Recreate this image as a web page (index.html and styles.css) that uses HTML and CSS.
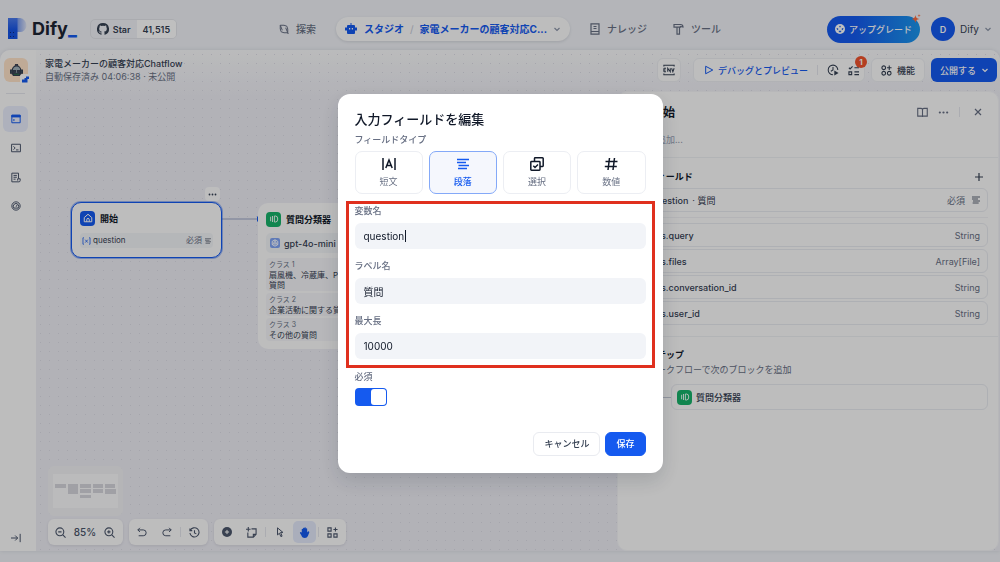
FILE: index.html
```html
<!DOCTYPE html>
<html lang="ja">
<head>
<meta charset="utf-8">
<title>Dify</title>
<link rel="stylesheet" href="styles.css">
</head>
<body>
<svg class="sprite" aria-hidden="true">
  <symbol id="chev" viewBox="0 0 8 8"><path d="M1.500 3 4 5.500 6.500 3"/></symbol>
  <symbol id="lines" viewBox="0 0 12 12"><path d="M0 1.500h12M0 4.500h9M1.500 7.500h10.500M1 10.500h9"/></symbol>
  <symbol id="dots" viewBox="0 0 12 12"><g fill="currentColor" stroke="none"><circle cx="2" cy="6" r="1.200"/><circle cx="6" cy="6" r="1.200"/><circle cx="10" cy="6" r="1.200"/></g></symbol>
  <symbol id="classify" viewBox="0 0 16 16"><path d="M3.500 5v6M6 4v8M8.500 4h1.500a3 4 0 0 1 0 8H8.500z"/></symbol>
  <symbol id="var" viewBox="0 0 14 12"><path d="M3 1H1.500v10H3M11 1h1.500v10H11M5 4l4 4.500M9 4 5 8.500"/></symbol>
</svg>

<div class="app">
  <header class="header">
    <div class="side">
      <a class="logo" href="#" aria-label="Dify">
        <svg width="20" height="22" viewBox="0 0 20 22"><defs><linearGradient id="lg"><stop offset="0" stop-color="#6f93ee"/><stop offset="1" stop-color="#dfe5f5"/></linearGradient><linearGradient id="lb" x2="0" y2="1"><stop offset="0" stop-color="#4c7bed"/><stop offset=".6" stop-color="#1553e6"/></linearGradient></defs><path d="M8 0h4a7.500 7.500 0 0 1 6.500 8 6.500 6.500 0 0 1-7 6H8z" fill="url(#lg)"/><path d="M0 0h9.500v21H0z" fill="url(#lb)"/><path d="M2 14h1v1H2zm3 0h1v1H5zM2 18h1v1H2zm3 0h1v1H5z" fill="#0b2a80"/></svg>
        <span>Dify<b>_</b></span>
      </a>
      <a class="github" href="#">
        <span class="star"><svg width="12" height="12" viewBox="0 0 16 16"><path fill="currentColor" d="M8 0a8 8 0 0 0-2.500 15.600c.4.100.5-.2.500-.4v-1.500c-2.200.5-2.700-.9-2.700-.9-.4-.9-.9-1.200-.9-1.200-.7-.5.100-.5.100-.5.800.100 1.200.8 1.200.8.700 1.200 1.900.9 2.300.7.100-.5.300-.9.500-1.100-1.800-.2-3.600-.9-3.600-4 0-.9.300-1.600.8-2.100-.100-.2-.4-1 .1-2.100 0 0 .7-.2 2.200.8a7.600 7.600 0 0 1 4 0c1.500-1 2.200-.8 2.200-.8.400 1.100.2 1.900.100 2.100.5.600.8 1.300.8 2.100 0 3.100-1.900 3.700-3.700 3.900.300.300.600.8.600 1.500v2.300c0 .2.100.5.500.4A8 8 0 0 0 8 0z"/></svg>Star</span><span class="count">41,515</span>
      </a>
    </div>
    <nav class="nav">
      <a href="#"><svg width="10" height="10" viewBox="0 0 12 12"><path d="M1.500 1.500h4.500a4.500 4.500 0 0 1 4.500 4.500v4.500H6A4.500 4.500 0 0 1 1.500 6zM1.500 1.500 4 7.500M8 4.500l2.500 6M9.500 10.500l2 1"/></svg>探索</a>
      <div class="crumb">
        <a href="#"><svg width="12" height="12" viewBox="0 0 12 12"><path fill="currentColor" stroke="none" fill-rule="evenodd" d="M5.500 0h1v2H9a1 1 0 0 1 1 1v1.500h2v3h-2V10a1 1 0 0 1-1 1H3a1 1 0 0 1-1-1V7.500H0v-3h2V3a1 1 0 0 1 1-1h2.500zM4 5v1.500h1.200V5zm2.800 0v1.500H8V5z"/></svg>スタジオ</a>
        <i>/</i>
        <a href="#">家電メーカーの顧客対応C...</a>
        <svg class="tiny" width="8" height="8"><use href="#chev"/></svg>
      </div>
      <a href="#"><svg width="10" height="12" viewBox="0 0 10 12"><path d="M1 .8h8v10.400H1zM1 8.500h8M3.500 3.500h3M3.500 5.500h3"/></svg>ナレッジ</a>
      <a href="#"><svg width="11" height="12" viewBox="0 0 11 12"><path d="M1 1.500h6.500c1.500 0 2.500.8 2.500 2.500l-2.500-.5v.7H1zM4 4.200v7h2.500v-7"/></svg>ツール</a>
    </nav>
    <div class="side end">
      <button class="upgrade"><svg width="10" height="10" viewBox="0 0 10 10"><circle cx="5" cy="5" r="5" fill="#fff"/><path fill="#2767e8" d="m5 1.500 1 1.300L5 3.600l-1-.8zM1.500 4l1.600.2.300 1.300-1.200.8zM8.500 4l-1.600.2-.3 1.300 1.200.8zM3.600 6.700h2.800L6 8.200H4z"/></svg>アップグレード<svg class="spark" width="10" height="10" viewBox="0 0 10 10"><path fill="#ff6a3d" d="M4.500 1c.4 2.500 1 3.300 4 4-3 .5-3.600 1.500-4 4-.4-2.500-1.200-3.500-4-4 2.800-.7 3.600-1.500 4-4zM8 0l.4 1.200L9.800 1.600l-1.400.4L8 3.300l-.4-1.300-1-.4 1-.4z"/></svg></button>
      <button class="account"><span class="avatar">D</span>Dify<svg class="tiny" width="8" height="8"><use href="#chev"/></svg></button>
    </div>
  </header>

  <div class="body">
    <aside class="rail">
      <div class="robot"><svg width="13" height="12" viewBox="0 0 14 13"><path d="M7 1v2" stroke="#d9442c"/><circle cx="7" cy="1.300" r="1.200" fill="#e1452d"/><path d="M2.500 6.500a4.500 4.500 0 0 1 9 0v4.500h-9z" fill="#a3b2ba"/><path d="M.5 6.500h2v3.500h-2zM11.500 6.500h2v3.500h-2z" fill="#445761"/><path d="M3 7h3v2H3zM8 7h3v2H8z" fill="#33424b"/><circle cx="4.500" cy="8" r=".8" fill="#e9f3f5"/><circle cx="9.500" cy="8" r=".8" fill="#e9f3f5"/><path d="M3.500 10h7v2.500h-7z" fill="#2c6b4c"/></svg><span class="mini"><svg width="7" height="7" viewBox="0 0 7 7"><path fill="#155aef" d="M0 3.500h2.500V2H4V.5h3V3H5.500v3.500H0z"/></svg></span></div>
      <hr>
      <a class="on" href="#" aria-label="オーケストレート"><svg width="10" height="10" viewBox="0 0 12 12"><path fill="currentColor" d="M1 1.500h10v2H1z"/><path d="M1 1.500h10v9H1zM3.500 6v2.500"/></svg></a>
      <a href="#" aria-label="API"><svg width="10" height="10" viewBox="0 0 12 12"><path d="M.7 1.500h10.600v9H.7zM3 4l2 2-2 2M6 8.300h3"/></svg></a>
      <a href="#" aria-label="ログ"><svg width="10" height="11" viewBox="0 0 12 12"><path d="M1 .8h8v6.500M1 .8v10.400h8.500M3 3.500h4M3 5.700h4M3 8h2.500M9.500 11.200a1.500 1.500 0 0 0 1.500-1.500V7.500H8v2.200"/></svg></a>
      <a href="#" aria-label="監視"><svg width="10" height="10" viewBox="0 0 12 12"><circle cx="6" cy="6" r="5"/><path d="M3.500 8.500a3.300 3.300 0 1 1 5 0zM6 7l1.500-2.500"/></svg></a>
      <button class="fold" aria-label="展開"><svg width="10" height="10" viewBox="0 0 12 12"><path d="M0 6h8M5 3l3 3-3 3M11 1v10"/></svg></button>
    </aside>

    <main class="canvas">
      <div class="bar">
        <div class="meta"><strong>家電メーカーの顧客対応Chatflow</strong><span>自動保存済み 04:06:38 · 未公開</span></div>
        <div class="tools">
          <button class="chip square" aria-label="環境変数"><svg width="12" height="12" viewBox="0 0 14 14"><path d="M1 3V1.500h12V3M1 11v1.500h12V11M1 5v4M1 5h2.500M1 7h2M1 9h2.500M5.500 9V5l3 4V5M10 5l1.500 4L13 5"/></svg></button>
          <div class="chip run">
            <button class="play"><svg width="10" height="10" viewBox="0 0 12 12"><path d="m2 1.500 8.500 4.500L2 10.500z"/></svg>デバッグとプレビュー</button>
            <i></i>
            <button aria-label="実行履歴"><svg width="12" height="12" viewBox="0 0 14 14"><path d="M7 12.500A5.600 5.600 0 1 1 12.600 7M7 3.500V7L4.500 8.500"/><path fill="currentColor" stroke="none" d="m8.500 7.500 5 3-5 3z"/></svg></button>
            <button aria-label="チェックリスト"><svg width="11" height="11" viewBox="0 0 12 12"><path d="m1 3 1.300 1.300L5 1.500M7 3h5M1 7.500h3v3H1zM7 7.500h5M7 10.500h5"/></svg><span class="badge">1</span></button>
          </div>
          <button class="chip"><svg width="11" height="11" viewBox="0 0 12 12"><circle cx="3" cy="3" r="2"/><circle cx="3" cy="9" r="2"/><circle cx="9" cy="9" r="2"/><path d="M9 .5v5M6.500 3h5"/></svg>機能</button>
          <button class="publish">公開する<svg width="8" height="8"><use href="#chev"/></svg></button>
        </div>
      </div>

      <div class="split">
        <section class="stage">
          <svg class="edge" width="37" height="8" viewBox="0 0 37 8"><path d="M0 4h37" stroke="#98a2c6"/><path d="M36 1.500v5" stroke="#155aef" stroke-width="2"/></svg>
          <button class="node-more" aria-label="メニュー"><svg width="9" height="9"><use href="#dots"/></svg></button>
          <article class="node start">
            <h3><span class="tile blue"><svg width="10" height="10" viewBox="0 0 12 12"><path d="M1.500 5.500 6 1.500l4.500 4v5h-9zM4.500 10.500V8a1.500 1.500 0 0 1 3 0v2.500"/></svg></span>開始</h3>
            <div class="param"><svg class="blue-ink" width="9" height="8"><use href="#var"/></svg>question<em>必須</em><svg width="6" height="6"><use href="#lines"/></svg></div>
          </article>
          <article class="node classifier">
            <h3><span class="tile green"><svg width="12" height="12"><use href="#classify"/></svg></span>質問分類器</h3>
            <div class="model"><span class="gpt"><svg width="8" height="8" viewBox="0 0 10 10"><circle cx="5" cy="5" r="1.500"/><path d="M5 1 8.500 3v4L5 9 1.500 7V3zM5 1v2.500M8.500 7 6.300 5.800M1.500 7l2.200-1.200"/></svg></span>gpt-4o-mini<small>CHAT</small></div>
            <dl>
              <div><dt>クラス 1</dt><dd>扇風機、冷蔵庫、PCなどに関する質問</dd></div>
              <div><dt>クラス 2</dt><dd>企業活動に関する質問</dd></div>
              <div><dt>クラス 3</dt><dd>その他の質問</dd></div>
            </dl>
          </article>

          <div class="dock">
            <svg class="minimap" width="75" height="50" viewBox="0 0 75 50"><path fill="#fafafb" d="M5 8h65v34H5z"/><path fill="#d6d6dc" d="M7 18h11v4H7zM20 18h10v10H20zM32 18h11v4H32zM32 23h11v4H32zM32 29h11v3H32zM45 18h10v4H45zM45 23h10v4H45zM57 18h10v4H57zM57 23h11v5H57z"/></svg>
            <div class="controls">
              <div class="group zoom">
                <button aria-label="縮小"><svg width="11" height="11" viewBox="0 0 12 12"><circle cx="5.300" cy="5.300" r="4.300"/><path d="m8.500 8.500 3 3M3.500 5.300h3.600"/></svg></button>
                <span>85%</span>
                <button aria-label="拡大"><svg width="11" height="11" viewBox="0 0 12 12"><circle cx="5.300" cy="5.300" r="4.300"/><path d="m8.500 8.500 3 3M3.500 5.300h3.600M5.300 3.500v3.600"/></svg></button>
              </div>
              <div class="group">
                <button aria-label="元に戻す"><svg width="10" height="10" viewBox="0 0 12 12"><path d="M3.500 1 1 3.500 3.500 6M1 3.500h6.500a3.500 3.500 0 0 1 0 7H2"/></svg></button>
                <button aria-label="やり直し"><svg width="10" height="10" viewBox="0 0 12 12"><path d="M8.500 1 11 3.500 8.500 6M11 3.500H4.500a3.500 3.500 0 0 0 0 7H10"/></svg></button>
                <i></i>
                <button aria-label="変更履歴"><svg width="11" height="11" viewBox="0 0 12 12"><path d="M1 1.500V4h2.500M1.300 4A5 5 0 1 1 1 6.500M6 3.500v3l2 1"/></svg></button>
              </div>
              <div class="group">
                <button aria-label="ブロックを追加"><svg width="10" height="10" viewBox="0 0 12 12"><circle cx="6" cy="6" r="6" fill="currentColor" stroke="none"/><path d="M6 3.500v5M3.500 6h5" stroke="#fff"/></svg></button>
                <button aria-label="コメントを追加"><svg width="11" height="11" viewBox="0 0 12 12"><path d="M6 2h5v6l-3 3H2V6M8 11V8h3M2.500 0v5M0 2.500h5"/></svg></button>
                <i></i>
                <button aria-label="ポインター"><svg width="10" height="10" viewBox="0 0 12 12"><path d="M3 1l6.500 5.500H6.700L8.500 11 7 11.500 5.300 7.500 3 9.500z"/></svg></button>
                <button class="on" aria-label="ハンド"><svg width="11" height="11" viewBox="0 0 12 12"><path fill="currentColor" stroke="none" d="M3 6V2.500a.7.700 0 0 1 1.400 0V1.500a.75.75 0 0 1 1.500 0V.9a.75.75 0 0 1 1.500 0V2a.75.75 0 0 1 1.500 0v4l.8-1a.9.9 0 0 1 1.500.9L9.700 9.800A3.500 3.500 0 0 1 6.500 12C4 12 3 10.500 2.500 9L1 6.500a.9.900 0 0 1 1.300-.9z"/></svg></button>
                <i></i>
                <button aria-label="整理"><svg width="11" height="11" viewBox="0 0 12 12"><path d="M1 1h3.500v3.500H1zM1 7.500h3.500V11H1zM7.500 7.500H11V11H7.500zM9.200.5v4.500M7 2.800h4.500"/></svg></button>
              </div>
            </div>
          </div>
        </section>

        <aside class="panel">
          <div class="head">
            <h2><span class="tile blue"><svg width="10" height="10" viewBox="0 0 12 12"><path d="M1.500 5.500 6 1.500l4.500 4v5h-9z"/></svg></span>開始</h2>
            <button aria-label="ヘルプ"><svg width="11" height="11" viewBox="0 0 12 12"><path d="M.8 1.500H4.500A1.500 1.500 0 0 1 6 3a1.500 1.500 0 0 1 1.500-1.500h3.700v8.500H.8zM6 3v8"/></svg></button>
            <button aria-label="その他"><svg width="11" height="11"><use href="#dots"/></svg></button>
            <i></i>
            <button aria-label="閉じる"><svg width="8" height="8" viewBox="0 0 8 8"><path d="m1 1 6 6M7 1 1 7"/></svg></button>
          </div>
          <p class="desc">説明を追加...</p>
          <section class="block">
            <div class="row-title"><h4>入力フィールド</h4><button aria-label="追加"><svg width="8" height="8" viewBox="0 0 8 8"><path d="M4 0v8M0 4h8"/></svg></button></div>
            <div class="item"><svg class="blue-ink" width="9" height="8"><use href="#var"/></svg><b>question</b><span>· 質問</span><em>必須</em><svg width="8" height="8"><use href="#lines"/></svg></div>
            <hr>
            <div class="item"><svg class="blue-ink" width="9" height="8"><use href="#var"/></svg><b>sys.query</b><em>String</em></div>
            <div class="item"><svg class="blue-ink" width="9" height="8"><use href="#var"/></svg><b>sys.files</b><em>Array[File]</em></div>
            <div class="item"><svg class="blue-ink" width="9" height="8"><use href="#var"/></svg><b>sys.conversation_id</b><em>String</em></div>
            <div class="item"><svg class="blue-ink" width="9" height="8"><use href="#var"/></svg><b>sys.user_id</b><em>String</em></div>
          </section>
          <section class="block next">
            <h4>次のステップ</h4>
            <p>このワークフローで次のブロックを追加</p>
            <div class="step"><span class="tile blue"></span><span class="wire"></span><div class="item"><span class="tile green"><svg width="12" height="12"><use href="#classify"/></svg></span><b>質問分類器</b></div></div>
          </section>
        </aside>
      </div>
    </main>
  </div>
</div>

<div class="overlay">
  <form class="modal" role="dialog" aria-labelledby="title">
    <h1 id="title">入力フィールドを編集</h1>
    <p class="label">フィールドタイプ</p>
    <div class="types">
      <button type="button"><svg width="14" height="14" viewBox="0 0 14 14"><path d="M1 1v12M13 1v12M3.800 11 7 3l3.200 8M5 8.500h4"/></svg>短文</button>
      <button type="button" class="on"><svg width="12" height="14" viewBox="0 -1 12 14"><use href="#lines" width="12" height="12"/></svg>段落</button>
      <button type="button"><svg width="14" height="14" viewBox="0 0 14 14"><path d="M4.500 4V1.500A.7.700 0 0 1 5.200.8h7.300a.7.700 0 0 1 .7.7v7.300a.7.700 0 0 1-.7.700H10M1.500 4.500h7.800a.7.700 0 0 1 .7.700v7.300a.7.700 0 0 1-.7.700H1.500a.7.700 0 0 1-.7-.7V5.200a.7.700 0 0 1 .7-.7zM3.300 8.800 5 10.500l3-3"/></svg>選択</button>
      <button type="button"><svg width="14" height="14" viewBox="0 0 14 14"><path d="M5.500 1 4 13M10.500 1 9 13M1.500 4.500h12M.8 9.500h12"/></svg>数値</button>
    </div>
    <div class="fields">
      <label for="name">変数名</label>
      <div class="focused"><input id="name" type="text" value="question"></div>
      <label for="lab">ラベル名</label>
      <div><input id="lab" type="text" value="質問"></div>
      <label for="max">最大長</label>
      <div><input id="max" type="text" inputmode="numeric" value="10000"></div>
    </div>
    <label class="label" for="req">必須</label>
    <input id="req" class="switch" type="checkbox" role="switch" checked>
    <div class="actions">
      <button type="button">キャンセル</button>
      <button type="submit" class="primary">保存</button>
    </div>
  </form>
</div>
</body>
</html>
```

FILE: styles.css
```css
* { box-sizing: border-box; margin: 0; padding: 0; }

:root {
  --blue: #155aef;
  --ink: #101828;
  --text: #354052;
  --muted: #676f83;
  --line: #e4e6ec;
}

body {
  font: 9px/13px Inter, "Noto Sans CJK JP", sans-serif;
  color: var(--text);
  background: #f0f2f7;
}

button, input { font: inherit; color: inherit; border: 0; background: none; }
button { display: inline-flex; align-items: center; justify-content: center; white-space: nowrap; }
a { color: inherit; text-decoration: none; }
em, i { font-style: normal; }
svg { display: block; flex: none; fill: none; stroke: currentColor; stroke-width: 1.2; }
.sprite { position: absolute; width: 0; height: 0; }

.app { display: flex; flex-direction: column; height: 100vh; padding-bottom: 11px; }

/* Header */
.header { display: flex; align-items: center; height: 50px; padding: 8px 8px 0; flex: none; }
.side { display: flex; flex: 1; align-items: center; gap: 13px; }
.side.end { justify-content: flex-end; gap: 11px; }
.logo { display: flex; align-items: center; gap: 4px; font-size: 18px; line-height: 22px; font-weight: 700; color: #1c2433; }
.logo svg { stroke: none; }
.logo b { color: var(--blue); }
.github { display: flex; height: 20px; border: 1px solid #e3e5ea; border-radius: 5px; overflow: hidden; font-weight: 600; align-items: stretch; }
.github span { display: flex; align-items: center; gap: 4px; padding: 0 6px; }
.github svg { stroke: none; }
.github .count { background: #fff; }

.nav { display: flex; align-items: center; gap: 14px; font-size: 10px; color: var(--muted); font-weight: 500; white-space: nowrap; }
.nav a { display: flex; align-items: center; gap: 7px; }
.nav > a { padding: 0 6px; }
.crumb { display: flex; align-items: center; gap: 6px; height: 24px; padding: 0 9px; border-radius: 12px; background: #fcfcfd; color: var(--blue); font-weight: 700; box-shadow: 0 1px 3px #1018281f; }
.crumb i { color: #c3c8d4; font-weight: 400; }
.tiny { color: #8a93a6; }

.upgrade { position: relative; height: 27px; padding: 0 8px; gap: 4px; border-radius: 14px; color: #fff; font-weight: 500; background: linear-gradient(90deg, #155aef 30%, #1a97ee); }
.upgrade svg { stroke: none; }
.spark { position: absolute; top: -2px; right: -1px; }
.account { gap: 5px; font-size: 10px; }
.avatar { display: grid; place-items: center; width: 24px; height: 24px; border-radius: 50%; background: var(--blue); color: #fff; font-size: 9px; font-weight: 600; }

/* Left rail */
.body { display: flex; flex: 1; min-height: 0; border-radius: 10px 10px 0 0; overflow: hidden; box-shadow: 0 0 4px #1018281a; }
.rail { display: flex; flex-direction: column; gap: 3px; width: 36px; padding: 8px 8px 0 3px; background: #fcfcfd; }
.rail a, .fold { display: grid; place-items: center; height: 26px; border-radius: 6px; color: #4b566b; }
.rail a.on { background: #e8edfb; color: var(--blue); }
.rail hr { border: 0; border-top: 1px solid var(--line); margin: 8px 3px 9px; }
.robot { position: relative; display: grid; place-items: center; width: 24px; height: 24px; margin-left: 1px; border-radius: 6px; background: #ffe3c8; }
.mini { position: absolute; right: -3px; bottom: -3px; padding: 2px; border-radius: 3px; background: #fff; }
.mini svg { stroke: none; }
.fold { margin-top: auto; }

/* Canvas */
.canvas { flex: 1; min-width: 0; display: flex; flex-direction: column; background: radial-gradient(circle, #dcdde6 0.8px, transparent 1px) 0 0 / 9px 9px, linear-gradient(#f9fafb, #eeeef5 46px); }
.bar { display: flex; justify-content: space-between; height: 41px; padding: 7px 3px 0 9px; }
.meta { display: flex; flex-direction: column; }
.meta strong { font-weight: 500; }
.meta span { color: var(--muted); }
.tools { display: flex; align-items: center; gap: 6px; height: 26px; }
.chip, .publish { height: 24px; border-radius: 6px; font-weight: 500; }
.chip { display: flex; align-items: center; gap: 5px; padding: 0 9px; border: 1px solid #eceef2; background: #fcfcfd; }
.square { width: 24px; padding: 0; margin-right: 6px; }
.run { gap: 9px; padding: 0 5px 0 10px; }
.run button { position: relative; }
.run i, .head i { width: 1px; height: 10px; background: var(--line); }
.run .play { gap: 4px; color: var(--blue); }
.badge { position: absolute; top: -9px; right: -8px; width: 12px; height: 12px; border-radius: 6px; background: #f0532d; color: #fff; font-size: 8px; line-height: 12px; font-weight: 700; }
.publish { gap: 5px; padding: 0 8px 0 9px; background: var(--blue); color: #fff; }

.split { display: flex; flex: 1; min-height: 0; }
.stage { position: relative; flex: 1; display: flex; flex-direction: column; justify-content: flex-end; padding: 0 12px 6px; overflow: hidden; }

.tile { display: grid; place-items: center; width: 15px; height: 15px; border-radius: 4px; color: #fff; flex: none; }
.tile.blue { background: var(--blue); }
.tile.green { background: #17b26a; }
.blue-ink { color: var(--blue); }

.node { position: absolute; width: 151px; padding: 8px; border-radius: 10px; background: #fcfcfd; }
.node h3 { display: flex; align-items: center; gap: 5px; font-size: 9px; font-weight: 700; color: var(--ink); height: 16px; margin-bottom: 6px; }
.start { left: 35px; top: 111px; border: 1px solid var(--blue); padding: 7px 8px 9px; box-shadow: 0 0 0 1px #155aef66; }
.start h3 { margin-bottom: 7px; }
.param { display: flex; align-items: center; gap: 2px; height: 15px; padding: 0 2px; border-radius: 4px; background: #f2f4f7; font-size: 8px; }
.param em { margin-left: auto; margin-right: 1px; color: var(--muted); }
.node-more { position: absolute; left: 169px; top: 96px; width: 15px; height: 14px; border-radius: 4px; background: #fcfcfd; }
.edge { position: absolute; left: 186px; top: 124px; }
.classifier { left: 222px; top: 112px; }
.model { display: flex; align-items: center; gap: 4px; height: 20px; padding: 0 4px; margin-bottom: 5px; border-radius: 5px; background: #f2f4f7; font-size: 9px; font-weight: 500; }
.model small { font-size: 7px; padding: 0 2px; border: 1px solid #d5d9e2; border-radius: 3px; line-height: 8px; }
.gpt { display: grid; place-items: center; width: 10px; height: 10px; border-radius: 2px; background: #7fa3f5; color: #fff; }
.node dl { display: grid; gap: 2px; }
.node dl div { padding: 2px 3px 1px; border-radius: 4px; background: #f4f5f8; line-height: 10px; font-size: 8px; }
.node dt { font-size: 7px; color: var(--muted); }

.minimap { border-radius: 6px; background: #f2f2f5; stroke: none; margin-bottom: 3px; }
.controls { display: flex; gap: 6px; }
.group { display: flex; align-items: center; gap: 2px; height: 26px; padding: 0 2px 0 1px; border-radius: 6px; background: #fcfcfd; box-shadow: 0 1px 3px #1018281a; color: #4b566b; }
.group button { width: 23px; height: 22px; border-radius: 5px; }
.group .on { background: #e3e9fa; color: var(--blue); }
.group i { width: 1px; height: 10px; background: var(--line); }
.group.zoom { gap: 0; font-size: 10px; font-weight: 500; }
.zoom span { width: 26px; text-align: center; }

/* Settings panel */
.panel { width: 382px; margin-right: 1px; border: 1px solid #f4f5f7; border-radius: 10px; background: #fcfcfd; }
.head { display: flex; align-items: center; gap: 10px; padding: 9px 16px 0 12px; height: 31px; color: var(--muted); }
.head h2 { display: flex; align-items: center; gap: 6px; margin-right: auto; font-size: 12px; font-weight: 700; color: var(--ink); }
.head i + button { margin-left: 4px; }
.desc { padding: 10px 12px; height: 35px; color: #98a2b3; border-bottom: 1px solid #eef0f3; }
.block { display: flex; flex-direction: column; gap: 2px; padding: 12px 10px 11px 12px; border-bottom: 1px solid #eef0f3; }
.block h4 { font-size: 9px; font-weight: 700; color: var(--ink); }
.row-title { display: flex; align-items: center; justify-content: space-between; padding-right: 5px; margin-bottom: 3px; }
.block hr { border: 0; border-top: 1px solid #f0f1f4; margin: 3px 0; }
.item { display: flex; align-items: center; gap: 4px; height: 24px; padding: 0 7px; border: 1px solid #e9ebf0; border-radius: 6px; }
.item b { font-weight: 500; }
.item em { margin-left: auto; color: var(--muted); }
.item em + svg { margin-left: 3px; }
.next { border: 0; padding-top: 11px; }
.next p { color: var(--muted); }
.step { display: flex; align-items: center; margin-top: 6px; }
.wire { width: 26px; height: 1px; background: #c3c8d4; }
.step .item { flex: 1; height: 26px; padding: 0 5px; }

/* Dialog */
.overlay { position: fixed; inset: 0; display: flex; align-items: center; justify-content: center; padding-top: 5px; background: #00000040; }
.modal { width: 325px; padding: 15px 17px 17px; border-radius: 12px; background: #fff; box-shadow: 0 8px 20px #10182826; color: var(--muted); line-height: 14px; }
.modal h1 { font-size: 13px; line-height: 20px; font-weight: 500; color: var(--ink); margin-bottom: 4px; }
.label, .fields label { display: block; font-weight: 500; }
.types { display: grid; grid-template-columns: repeat(4, 1fr); gap: 6px; margin: 4px 0 7px; }
.types button { flex-direction: column; gap: 4px; height: 43px; border: 1px solid #eceef3; border-radius: 7px; }
.types svg { color: var(--ink); stroke-width: 1.5; }
.types .on { border-color: #84a9f8; background: #f5f7fd; color: var(--blue); font-weight: 500; }
.types .on svg { color: var(--blue); }
.fields { margin: 0 -9px 2px; padding: 0 6px 6px; border: 3px solid #e0301e; }
.fields div { position: relative; margin: 5px 0 10px; }
.fields div:last-child { margin-bottom: 0; }
.fields input { display: block; width: 100%; height: 26px; padding: 0 9px; border-radius: 6px; background: #f2f4f8; color: var(--ink); font-size: 10px; outline: 0; caret-color: transparent; }
.focused::after { content: ""; position: absolute; left: 50px; top: 7px; width: 1px; height: 12px; background: var(--ink); }
.switch { appearance: none; display: block; width: 32px; height: 18px; margin: 4px 0 26px; padding: 1px; border-radius: 4px; background: var(--blue); }
.switch::before { content: ""; display: block; width: 15px; height: 16px; margin-left: 15px; border-radius: 3px; background: #fff; }
.actions { display: flex; justify-content: flex-end; gap: 5px; }
.actions button { height: 24px; padding: 0 10px; border: 1px solid #e9ebf0; border-radius: 6px; color: var(--text); font-weight: 500; }
.actions .primary { border-color: var(--blue); background: var(--blue); color: #fff; }
```
